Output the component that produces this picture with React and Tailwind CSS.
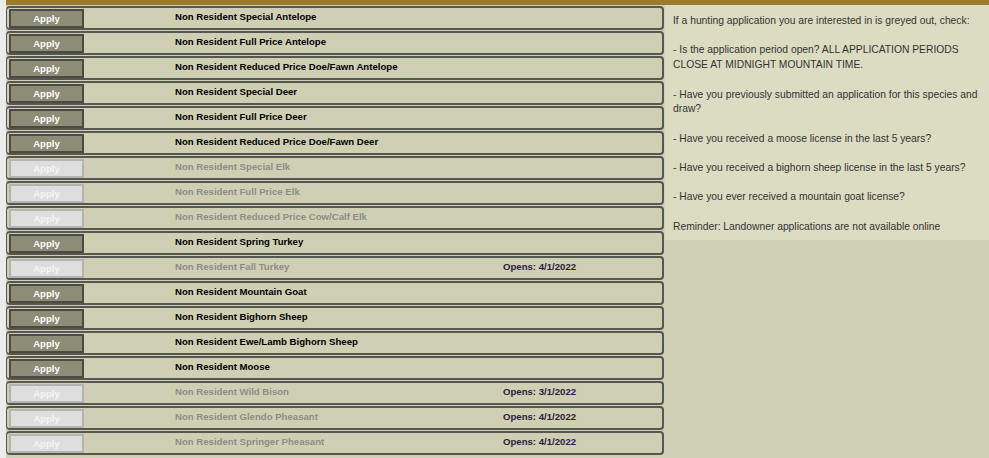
import React from "react";

const rows = [
  { name: "Non Resident Special Antelope", on: true },
  { name: "Non Resident Full Price Antelope", on: true },
  { name: "Non Resident Reduced Price Doe/Fawn Antelope", on: true },
  { name: "Non Resident Special Deer", on: true },
  { name: "Non Resident Full Price Deer", on: true },
  { name: "Non Resident Reduced Price Doe/Fawn Deer", on: true },
  { name: "Non Resident Special Elk", on: false },
  { name: "Non Resident Full Price Elk", on: false },
  { name: "Non Resident Reduced Price Cow/Calf Elk", on: false },
  { name: "Non Resident Spring Turkey", on: true },
  { name: "Non Resident Fall Turkey", on: false, opens: "4/1/2022" },
  { name: "Non Resident Mountain Goat", on: true },
  { name: "Non Resident Bighorn Sheep", on: true },
  { name: "Non Resident Ewe/Lamb Bighorn Sheep", on: true },
  { name: "Non Resident Moose", on: true },
  { name: "Non Resident Wild Bison", on: false, opens: "3/1/2022" },
  { name: "Non Resident Glendo Pheasant", on: false, opens: "4/1/2022" },
  { name: "Non Resident Springer Pheasant", on: false, opens: "4/1/2022" },
];

function Row({ row }) {
  return (
    <div className="flex h-[24px] mb-[1px] rounded-[4px] border-t-2 border-b-2 border-r-2 border-l border-[#575752] bg-[#cfcfb4]">
      <div className="w-[168px] shrink-0 pl-[2px] pt-[1px]">
        <button
          disabled={!row.on}
          className={
            row.on
              ? "block w-[75px] h-[19px] border-2 border-[#4b4b44] bg-[#8c8c77] text-white text-[9.6px] font-semibold leading-none"
              : "block w-[75px] h-[19px] border-2 border-[#b4b4b4] bg-[#dedede] text-[#f6f6f6] text-[9.6px] font-semibold leading-none"
          }
        >
          Apply
        </button>
      </div>
      <div
        className={
          row.on
            ? "w-[328px] shrink-0 pt-[3px] text-[9.6px] font-bold leading-[12px] text-black"
            : "w-[328px] shrink-0 pt-[3px] text-[9.6px] font-bold leading-[12px] text-[#8d8d86]"
        }
      >
        {row.name}
      </div>
      {row.opens && (
        <div className="pt-[3px] text-[9.6px] font-bold leading-[12px] text-[#2b213d]">
          Opens: {row.opens}
        </div>
      )}
    </div>
  );
}

export default function App() {
  return (
    <div
      className="flex h-[458px] w-[989px] overflow-hidden bg-[#cfcfb4]"
      style={{ fontFamily: '"Liberation Sans", Arial, sans-serif' }}
    >
      <div className="w-[6px] shrink-0 bg-[#ececec]" />
      <div className="flex flex-1 flex-col">
        <div className="h-[5px] shrink-0 bg-[#9b7a2c]" />
        <div className="flex flex-1">
          {/* lista aplikasi */}
          <div className="w-[658px] shrink-0 pt-[1px]">
            {rows.map((row) => (
              <Row key={row.name} row={row} />
            ))}
          </div>
          {/* info panel */}
          <div className="ml-[1px] flex-1">
            <div className="h-[235px] bg-[#dcdcc2] pl-[8px] pt-[9px] text-[10.3px] leading-[14.7px] text-[#333333] whitespace-nowrap">
              <p>If a hunting application you are interested in is greyed out, check:</p>
              <br />
              <p>
                - Is the application period open? ALL APPLICATION PERIODS
                <br />
                CLOSE AT MIDNIGHT MOUNTAIN TIME.
              </p>
              <br />
              <p>
                - Have you previously submitted an application for this species and
                <br />
                draw?
              </p>
              <br />
              <p>- Have you received a moose license in the last 5 years?</p>
              <br />
              <p>- Have you received a bighorn sheep license in the last 5 years?</p>
              <br />
              <p>- Have you ever received a mountain goat license?</p>
              <br />
              <p>Reminder: Landowner applications are not available online</p>
            </div>
          </div>
        </div>
      </div>
    </div>
  );
}
